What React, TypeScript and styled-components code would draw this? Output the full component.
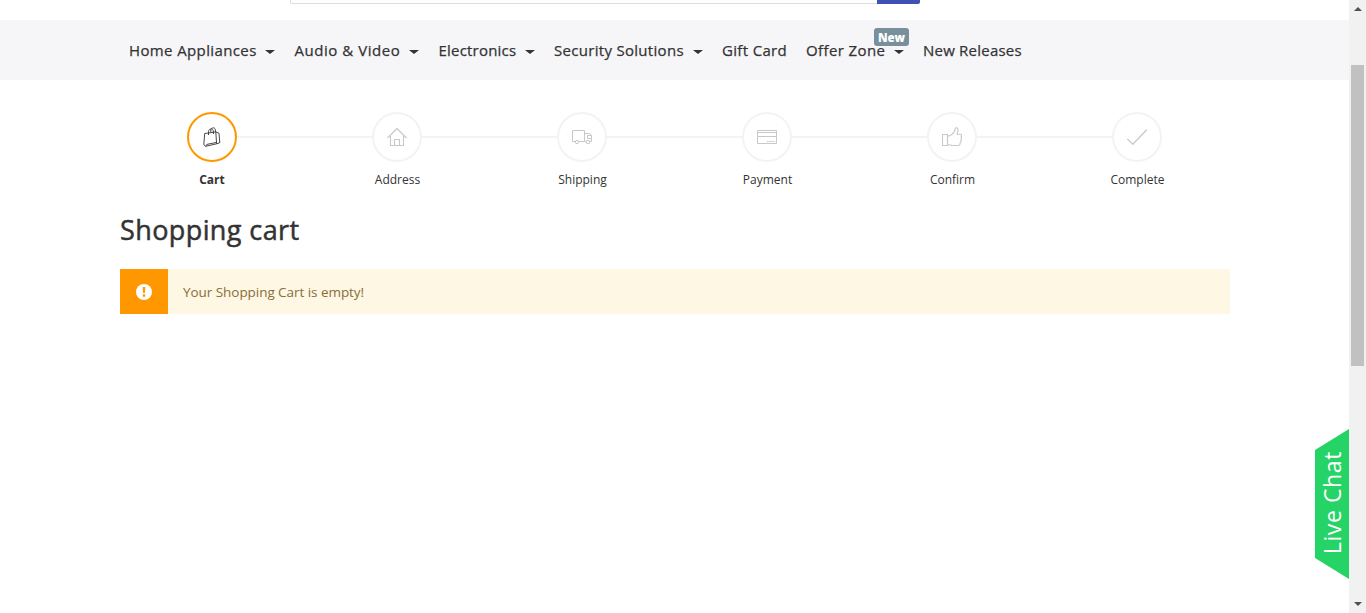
import React from "react";
import styled, { createGlobalStyle, css } from "styled-components";

const GlobalStyle = createGlobalStyle`
  * { box-sizing: border-box; }
  body { margin: 0; background: #fff; color: #333; font-family: "Open Sans", "Noto Sans", sans-serif; overflow: hidden; }
`;

const Window = styled.div`
  position: relative;
  display: flex;
  width: 1366px;
  height: 613px;
`;

const Page = styled.main`
  flex: 1;
`;

const SearchRow = styled.div`
  display: flex;
  height: 20px;
  padding-left: 290px;
  align-items: flex-start;
`;

const SearchField = styled.div`
  width: 587px;
  height: 4px;
  border: 1px solid #ddd;
  border-width: 0 0 1px 1px;
  border-bottom-left-radius: 2px;
`;

const SearchButton = styled.div`
  width: 43px;
  height: 4px;
  background: #3f51b5;
  border-bottom-right-radius: 2px;
`;

const Nav = styled.nav`
  display: flex;
  align-items: center;
  height: 60px;
  padding-left: 129px;
  background: #f6f6f9;
`;

const NavItem = styled.a<{ $width: number }>`
  position: relative;
  display: flex;
  align-items: center;
  width: ${(p) => p.$width}px;
  height: 60px;
  padding-bottom: 1px;
  font-size: 15px;
  font-weight: 500;
  white-space: nowrap;
`;

const NavText = styled.span<{ $spacing: number }>`
  letter-spacing: ${(p) => p.$spacing}px;
  line-height: 18px;
  -webkit-text-stroke: 0.25px #333;
`;

const Caret = styled.i`
  margin: 4px 19.5px 0 auto;
  border: 5px solid transparent;
  border-top: 4px solid #333;
  border-bottom: 0;
`;

const Badge = styled.span`
  position: absolute;
  top: 8px;
  left: 68px;
  width: 35px;
  height: 18px;
  padding-top: 3px;
  border-radius: 3px;
  background: #78909c;
  color: #fff;
  font-size: 11.5px;
  font-weight: 800;
  line-height: 14px;
  text-align: center;
`;

const Content = styled.div`
  width: 1110px;
  margin-left: 120px;
  padding-top: 32px;
`;

const Steps = styled.ol`
  display: flex;
  margin: 0;
  padding: 0;
  list-style: none;
`;

const Step = styled.li`
  display: flex;
  flex-direction: column;
  align-items: center;
  width: 185px;
`;

const Track = styled.div`
  display: grid;
  grid-template-columns: 67px 50px 68px;
  align-items: center;
  width: 100%;
`;

const Line = styled.span<{ $hidden: boolean }>`
  height: 2px;
  background: ${(p) => (p.$hidden ? "transparent" : "#f3f3f3")};
`;

const Circle = styled.span<{ $active: boolean }>`
  display: flex;
  align-items: center;
  justify-content: center;
  width: 50px;
  height: 50px;
  border: 2px solid ${(p) => (p.$active ? "#ff9800" : "#f3f3f3")};
  border-radius: 50%;
  color: ${(p) => (p.$active ? "#333" : "#c8c8c8")};
`;

const StepLabel = styled.span<{ $active: boolean }>`
  margin-top: 9px;
  font-size: 12px;
  line-height: 18px;
  ${(p) => p.$active && css`padding-right: 1px; font-weight: 700;`}
`;

const Title = styled.h1`
  margin: 21px 0 19px;
  font-size: 27px;
  font-weight: 500;
  line-height: 40px;
  letter-spacing: 0.4px;
  -webkit-text-stroke: 0.5px #333;
`;

const Alert = styled.div`
  display: flex;
  height: 45px;
  background: #fdf7e3;
  color: #8a6d3b;
`;

const AlertIcon = styled.div`
  display: flex;
  align-items: center;
  justify-content: center;
  width: 48px;
  background: #ff9800;
`;

const AlertText = styled.p`
  margin: 0;
  padding-left: 15px;
  font-size: 13.5px;
  line-height: 46px;
  letter-spacing: -0.05px;
`;

const ChatTab = styled.a`
  position: absolute;
  right: 17px;
  top: 429px;
  display: flex;
  align-items: center;
  justify-content: center;
  width: 34px;
  height: 150px;
  background: #25d366;
  clip-path: polygon(0 21px, 100% 0, 100% 100%, 0 129px);
  color: #fff;
`;

const ChatText = styled.span`
  writing-mode: vertical-rl;
  transform: rotate(180deg);
  padding-top: 2px;
  font-size: 23px;
  line-height: 36px;
  letter-spacing: 0.6px;
  white-space: nowrap;
`;

const Scrollbar = styled.div`
  display: flex;
  flex-direction: column;
  align-items: center;
  width: 17px;
  background: #f1f1f1;
`;

const Arrow = styled.i<{ $down?: boolean }>`
  margin: ${(p) => (p.$down ? "auto 0 7px" : "7px 0 0")};
  border: 4px solid transparent;
  ${(p) => (p.$down ? "border-top-color: #505050; border-bottom: 0;" : "border-bottom-color: #505050; border-top: 0;")}
`;

const Thumb = styled.div`
  width: 13px;
  height: 301px;
  margin-top: 54px;
  background: #c1c1c1;
`;

const navItems = [
  { text: "Home Appliances", width: 165.5, spacing: 0.38, caret: true },
  { text: "Audio & Video", width: 144, spacing: 0.55, caret: true },
  { text: "Electronics", width: 115.5, spacing: 0.2, caret: true },
  { text: "Security Solutions", width: 168, spacing: 0.3, caret: true },
  { text: "Gift Card", width: 84, spacing: 0.33 },
  { text: "Offer Zone", width: 117, spacing: 0.4, caret: true, badge: "New" },
  { text: "New Releases", width: 110, spacing: 0.22 },
];

const steps = [
  {
    label: "Cart",
    icon: (
      <g strokeWidth="0.9">
        <path d="M2.7 6.5 13.8 4.9 14.6 16.8 3.7 19.3 1.8 17.7Z M3.7 19.3 4.8 17.4 14.6 15.4 M13.8 4.9 17 6.3 17.8 15.7 14.6 16.8" />
        <path d="M6.5 8V4.5C7 1.5 10.5 1 11.2 3.5L11.5 7 M8.8 5V2.7C9.8.4 12.6.1 13.2 2.3L13.7 5" />
      </g>
    ),
  },
  { label: "Address", icon: <path d="M.5 11 10 1.5l9.5 9.5 M3.5 9v9.5h13V9 M7.5 18.5v-6h5v6" strokeWidth="1.1" /> },
  {
    label: "Shipping",
    icon: (
      <>
        <path d="M3 14.5H.5v-11h12v11H7 M12.5 6.5h5l2 2v6H18 M14 14.5h-1.5 M19.5 11.5h-4v-3h4" />
        <circle cx="5" cy="15" r="1.7" />
        <circle cx="16" cy="15" r="1.7" />
      </>
    ),
  },
  {
    label: "Payment",
    icon: (
      <>
        <path d="M.5 3.5h19v13H.5Z M.5 5.5h19 M.5 9.5h19" />
        <path d="M10 14.5h8" strokeDasharray="1.7 .5" />
      </>
    ),
  },
  {
    label: "Confirm",
    icon: <path d="M.5 7.5h5v11h-5Z M5.5 9.5 9 8c3-1.6 3.9-3.8 4.2-6.6.5-1.2 2.9-.6 2.9 1.3 0 1.8-.8 3.4-1.2 4.5h3c2.2 0 2.1 2.4 1 3 1.3.8.8 2.6-.2 2.9.8 1 .3 2.2-.6 2.6.3 1.6-.5 2.8-2.1 2.8H11c-2.5 0-3-.9-5.5-1" strokeWidth="1.15" />,
  },
  { label: "Complete", icon: <path d="m.3 12 5.5 5.3L19.7 2.8" strokeWidth="1.25" /> },
];

export default function App() {
  return (
    <>
      <GlobalStyle />
      <Window>
        <Page>
          <SearchRow>
            <SearchField />
            <SearchButton />
          </SearchRow>
          <Nav>
            {navItems.map((item) => (
              <NavItem key={item.text} $width={item.width}>
                <NavText $spacing={item.spacing}>{item.text}</NavText>
                {item.caret && <Caret />}
                {item.badge && <Badge>{item.badge}</Badge>}
              </NavItem>
            ))}
          </Nav>
          <Content>
            <Steps>
              {steps.map((step, i) => (
                <Step key={step.label}>
                  <Track>
                    <Line $hidden={i === 0} />
                    <Circle $active={i === 0}>
                      <svg width="20" height="20" viewBox="0 0 20 20" fill="none" stroke="currentColor" strokeWidth="1" strokeLinejoin="round">
                        {step.icon}
                      </svg>
                    </Circle>
                    <Line $hidden={i === steps.length - 1} />
                  </Track>
                  <StepLabel $active={i === 0}>{step.label}</StepLabel>
                </Step>
              ))}
            </Steps>
            <Title>Shopping cart</Title>
            <Alert>
              <AlertIcon>
                <svg width="16" height="16" viewBox="0 0 16 16">
                  <circle cx="8" cy="8" r="8" fill="#fff" />
                  <path d="M6.7 3h2.6l-.4 6H7.1Z M6.8 10.3h2.4v2.4H6.8Z" fill="#ff9800" />
                </svg>
              </AlertIcon>
              <AlertText>Your Shopping Cart is empty!</AlertText>
            </Alert>
          </Content>
        </Page>
        <Scrollbar>
          <Arrow />
          <Thumb />
          <Arrow $down />
        </Scrollbar>
        <ChatTab>
          <ChatText>Live Chat</ChatText>
        </ChatTab>
      </Window>
    </>
  );
}
